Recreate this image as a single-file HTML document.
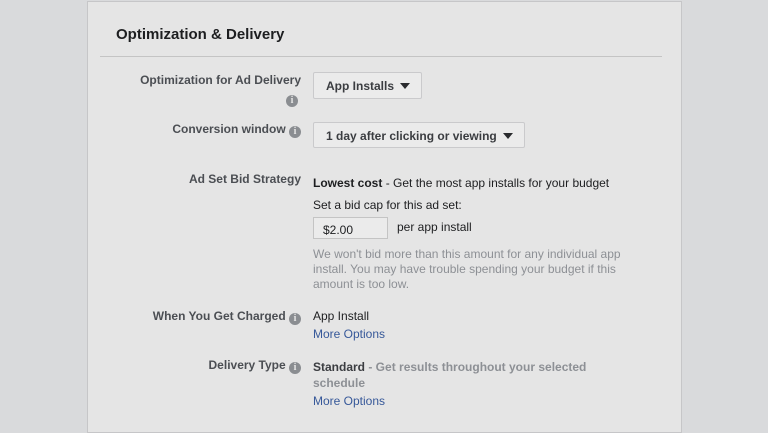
<!DOCTYPE html>
<html><head><style>
body{margin:0;width:768px;height:420px;background:#d9dadc;font-family:"Liberation Sans",sans-serif;position:relative;overflow:hidden}
.p{position:absolute;left:87px;top:1px;width:593px;height:430px;background:#e5e5e5;border:1px solid #c6c6c8}
.a{position:absolute;white-space:nowrap}
.t{left:116px;top:26px;font-size:15px;font-weight:bold;color:#1d1e20}
.hr{left:100px;top:56px;width:562px;height:1px;background:#c4c4c4}
.l{font-size:12px;font-weight:bold;color:#4b4e53;text-align:right;right:467px}
.v{left:313px;font-size:12px;color:#1d1e20}
.i{display:inline-block;width:12px;height:12px;border-radius:50%;background:#8a8d91;color:#e5e5e5;font-size:10px;font-weight:bold;text-align:center;line-height:12px;vertical-align:-1px;font-family:"Liberation Serif",serif}
.btn{position:absolute;background:#ebebeb;border:1px solid #cacacc;border-radius:2px;font-size:12px;font-weight:bold;color:#3b3d41;box-sizing:border-box;padding-left:12px;line-height:26px}
.tri{display:inline-block;width:0;height:0;border-left:5px solid transparent;border-right:5px solid transparent;border-top:6px solid #2a2b2e;margin-left:6px;vertical-align:1px}
.g{color:#8d9095}
.lk{color:#365899}
</style></head><body>
<div class="p"></div>
<div class="a t">Optimization &amp; Delivery</div>
<div class="a hr"></div>

<div class="a l" style="top:73px">Optimization for Ad Delivery</div>
<div class="a" style="left:286px;top:89px"><span class="i">i</span></div>
<div class="btn" style="left:313px;top:72px;width:109px;height:27px">App Installs<span class="tri"></span></div>

<div class="a l" style="top:122px">Conversion window <span class="i">i</span></div>
<div class="btn" style="left:313px;top:122px;width:212px;height:26px">1 day after clicking or viewing<span class="tri"></span></div>

<div class="a l" style="top:172px">Ad Set Bid Strategy</div>
<div class="a v" style="top:176px"><b>Lowest cost</b> - Get the most app installs for your budget</div>
<div class="a v" style="top:198px">Set a bid cap for this ad set:</div>
<div class="a" style="left:313px;top:217px;width:75px;height:22px;border:1px solid #c4c4c4;background:#ebebeb;box-sizing:border-box;font-size:12px;color:#1d1e20;padding:5px 0 0 9px">$2.00</div>
<div class="a v" style="top:220px;left:397px">per app install</div>
<div class="a v g" style="top:247px;line-height:15px">We won't bid more than this amount for any individual app<br>install. You may have trouble spending your budget if this<br>amount is too low.</div>

<div class="a l" style="top:309px">When You Get Charged <span class="i">i</span></div>
<div class="a v" style="top:309px">App Install</div>
<div class="a v lk" style="top:327px">More Options</div>

<div class="a l" style="top:358px">Delivery Type <span class="i">i</span></div>
<div class="a v g" style="top:359px;line-height:16px;font-weight:bold"><span style="color:#3b3d41">Standard</span> - Get results throughout your selected<br>schedule</div>
<div class="a v lk" style="top:394px">More Options</div>
</body></html>
